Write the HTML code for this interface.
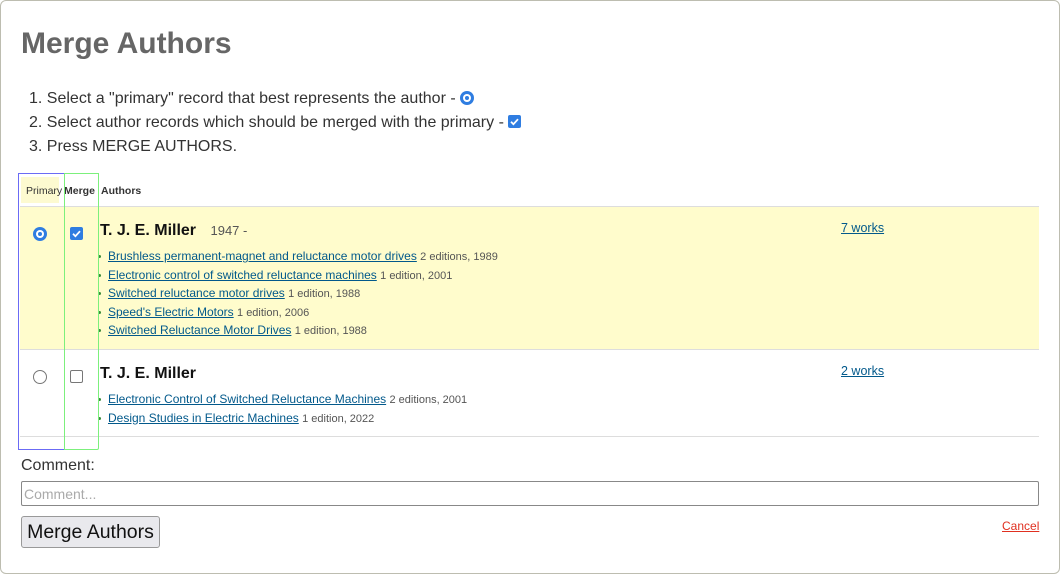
<!DOCTYPE html>
<html><head><style>
*{box-sizing:border-box;margin:0;padding:0}
body{width:1060px;height:568px;background:#fff;font-family:"Liberation Sans",sans-serif;position:relative;overflow:hidden}
.frame{position:absolute;left:0;top:0;width:1060px;height:574px;border:1px solid #bdbdb0;border-radius:6px}
.a{position:absolute;white-space:nowrap}
h1{position:absolute;left:21px;top:27px;font-size:30px;color:#666;font-weight:bold}
ol{position:absolute;left:29px;top:87px;font-size:16px;color:#333;line-height:24px;list-style:none}
a{color:#02598b;text-decoration:underline}
.bk{font-size:12px;height:18.5px;line-height:18px;color:#333;position:relative;padding-left:10px}
.bk span{color:#555;font-size:11px}
.dot{position:absolute;left:0;top:8px;width:3px;height:3px;border-radius:50%;background:#3a8a3a}
.cb{position:absolute;width:13px;height:13px;border-radius:2px}
.rad{position:absolute;width:14px;height:14px;border-radius:50%;background:#2f7de1}
.rad:after{content:"";position:absolute;left:3px;top:3px;width:8px;height:8px;border-radius:50%;background:#fff}
.rad:before{content:"";position:absolute;left:5px;top:5px;width:4px;height:4px;border-radius:50%;background:#2f7de1;z-index:1}
</style></head><body>
<div class="frame"></div>
<h1>Merge Authors</h1>
<ol>
<li>1. Select a "primary" record that best represents the author - <span style="display:inline-block;position:relative;width:14px;height:14px;vertical-align:-2px"><span class="rad" style="left:0;top:0"></span></span></li>
<li>2. Select author records which should be merged with the primary - <span style="display:inline-block;position:relative;width:13px;height:13px;vertical-align:-1px"><svg class="cb" style="left:0;top:0;background:#2f7de1" viewBox="0 0 13 13"><path d="M3 6.8l2.4 2.4L10 4.2" stroke="#fff" stroke-width="1.8" fill="none"/></svg></span></li>
<li>3. Press MERGE AUTHORS.</li>
</ol>
<div class="a" style="left:21px;top:177px;width:38px;height:26px;background:#fdfad0"></div>
<div class="a" style="left:26px;top:185px;font-size:10.5px;color:#333">Primary</div>
<div class="a" style="left:64px;top:185px;font-size:10.5px;font-weight:bold;color:#333">Merge</div>
<div class="a" style="left:101px;top:185px;font-size:10.5px;font-weight:bold;color:#333">Authors</div>
<div class="a" style="left:20px;top:206px;width:1019px;height:1px;background:#ddd"></div>
<div class="a" style="left:20px;top:207px;width:1019px;height:142px;background:#fffccc"></div>
<div class="a" style="left:20px;top:349px;width:1019px;height:1px;background:#ddd"></div>
<div class="a" style="left:20px;top:436px;width:1019px;height:1px;background:#ddd"></div>
<div class="rad" style="left:33px;top:227px"></div>
<svg class="cb" style="left:70px;top:227px;background:#2f7de1" viewBox="0 0 13 13"><path d="M3 6.8l2.4 2.4L10 4.2" stroke="#fff" stroke-width="1.8" fill="none"/></svg>
<div class="a" style="left:100px;top:222px;font-size:16px;font-weight:bold;color:#111">T. J. E. Miller <span style="font-weight:normal;font-size:13px;color:#555;margin-left:10px">1947 -</span></div>
<div class="a" style="left:841px;top:221px;font-size:12.5px"><a>7 works</a></div>
<div class="a" style="left:98px;top:247px">
<div class="bk"><i class="dot"></i><a>Brushless permanent-magnet and reluctance motor drives</a> <span>2 editions, 1989</span></div>
<div class="bk"><i class="dot"></i><a>Electronic control of switched reluctance machines</a> <span>1 edition, 2001</span></div>
<div class="bk"><i class="dot"></i><a>Switched reluctance motor drives</a> <span>1 edition, 1988</span></div>
<div class="bk"><i class="dot"></i><a>Speed's Electric Motors</a> <span>1 edition, 2006</span></div>
<div class="bk"><i class="dot"></i><a>Switched Reluctance Motor Drives</a> <span>1 edition, 1988</span></div>
</div>
<div class="a" style="left:33px;top:370px;width:14px;height:14px;border-radius:50%;border:1.5px solid #777;background:#fff"></div>
<div class="cb" style="left:70px;top:370px;border:1.5px solid #777;background:#fff"></div>
<div class="a" style="left:100px;top:365px;font-size:16px;font-weight:bold;color:#111">T. J. E. Miller</div>
<div class="a" style="left:841px;top:364px;font-size:12.5px"><a>2 works</a></div>
<div class="a" style="left:98px;top:390px">
<div class="bk"><i class="dot"></i><a>Electronic Control of Switched Reluctance Machines</a> <span>2 editions, 2001</span></div>
<div class="bk"><i class="dot"></i><a>Design Studies in Electric Machines</a> <span>1 edition, 2022</span></div>
</div>
<div class="a" style="left:18px;top:173px;width:47px;height:277px;border:1.5px solid #6b6bf5"></div>
<div class="a" style="left:64px;top:173px;width:35px;height:277px;border:1.5px solid #7cf07c;border-radius:0 0 2px 0"></div>
<div class="a" style="left:21px;top:457px;font-size:16px;color:#333">Comment:</div>
<div class="a" style="left:21px;top:481px;width:1018px;height:25px;border:1px solid #888;border-radius:2px;font-size:14px;color:#aaa;padding:4px 2px">Comment...</div>
<div class="a" style="left:21px;top:516px;width:139px;height:32px;border:1px solid #999;border-radius:3px;background:#e9e9ed;font-size:19.5px;color:#111;text-align:center;line-height:31px">Merge Authors</div>
<div class="a" style="left:1002px;top:519px;font-size:12px"><a style="color:#e03020">Cancel</a></div>
</body></html>
